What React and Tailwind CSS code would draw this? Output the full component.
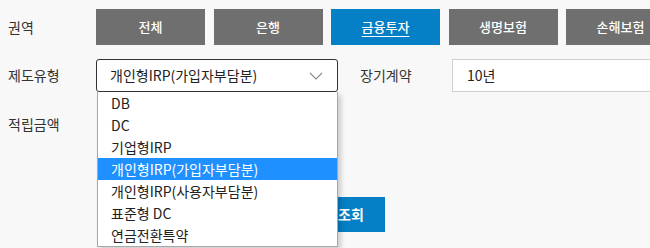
const types = ['DB', 'DC', '기업형IRP', '개인형IRP(가입자부담분)', '개인형IRP(사용자부담분)', '표준형 DC', '연금전환특약'];
const sectors = ['전체', '은행', '금융투자', '생명보험', '손해보험'];

const App = () => {
  const selected = '개인형IRP(가입자부담분)';
  const sector = '금융투자';

  return (
    <div
      className="w-[650px] h-[248px] overflow-hidden bg-[#f8f8f8] pl-2 text-[#333]"
      style={{ fontFamily: '"Noto Sans CJK KR", "Noto Sans", sans-serif' }}
    >
      {/* 권역 */}
      <div className="flex items-center pt-[9px]">
        <div className="w-[88px] shrink-0 text-[14px]">권역</div>
        <div className="flex gap-[8.5px]">
          {sectors.map((s) => (
            <button
              key={s}
              className={`w-[109px] h-[36px] shrink-0 text-[13px] font-medium text-white ${
                s === sector ? 'bg-[#0580c7]' : 'bg-[#6f6f6f]'
              }`}
            >
              <span className={s === sector ? 'underline underline-offset-4' : ''}>{s}</span>
            </button>
          ))}
        </div>
      </div>

      {/* 제도유형 / 장기계약 */}
      <div className="flex items-center mt-[14px]">
        <div className="w-[88px] shrink-0 text-[14px]">제도유형</div>
        <div className="relative z-10">
          <div className="w-[242px] h-[33px] bg-white border-[1.5px] border-[#333] rounded-[3px] flex items-center justify-between pl-[13px] pr-[14px] text-[14px] text-[#222]">
            <span>{selected}</span>
            <svg width="14" height="8" viewBox="0 0 14 8" fill="none">
              <path d="M1 1l6 6 6-6" stroke="#8a8a8a" strokeWidth="1.1" />
            </svg>
          </div>
          <ul className="absolute left-[1px] top-[33px] w-[241px] bg-white border border-t-0 border-[#a8a8a8] shadow-[3px_3px_5px_rgba(0,0,0,0.18)] text-[14px] text-[#222]">
            {types.map((t) => (
              <li
                key={t}
                className={`h-[22px] flex items-center pl-[13px] ${
                  t === selected ? 'bg-[#1e90ff] text-white' : ''
                }`}
              >
                {t}
              </li>
            ))}
          </ul>
        </div>
        <div className="w-[114px] shrink-0 pl-[22px] text-[14px]">장기계약</div>
        <div className="w-[210px] h-[33px] shrink-0 bg-white border border-[#d0d0d0] flex items-center pl-[14px] text-[14px] text-[#222]">
          10년
        </div>
      </div>

      {/* 적립금액 */}
      <div className="flex items-center mt-[22px] h-[20px]">
        <div className="w-[88px] shrink-0 text-[14px]">적립금액</div>
      </div>

      {/* 조회 */}
      <div className="flex mt-[63px] pl-[309px]">
        <button className="w-[68px] h-[35px] bg-[#0580c7] text-white text-[14px] font-bold">조회</button>
      </div>
    </div>
  );
};

export default App;
